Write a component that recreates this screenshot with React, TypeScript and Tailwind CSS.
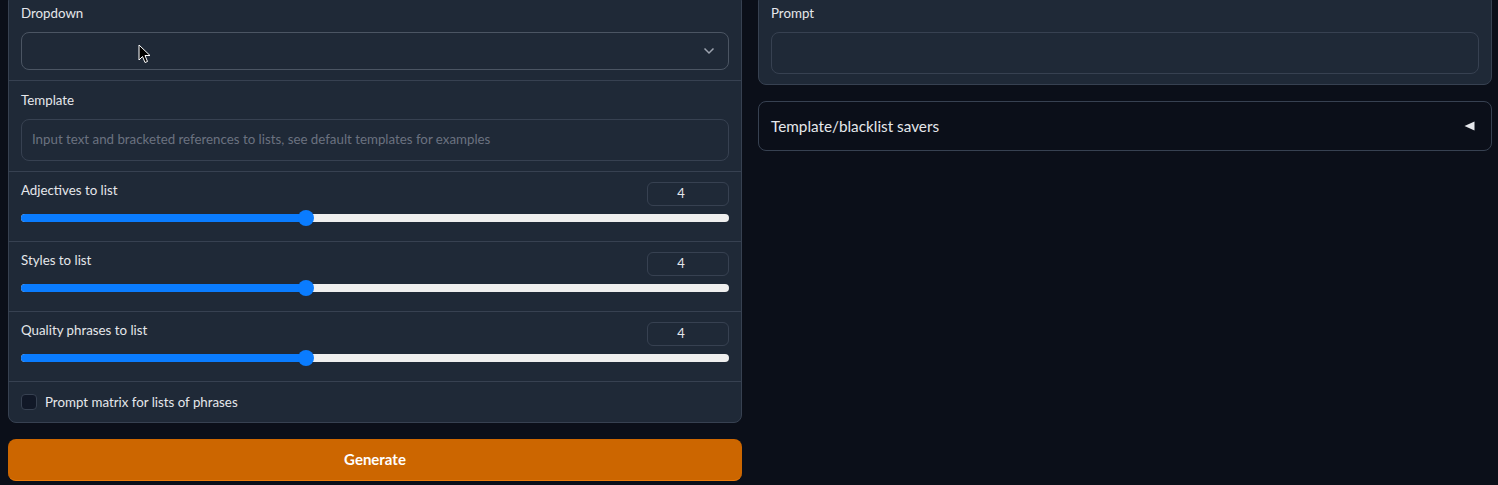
import React from "react";

const font = { fontFamily: "Lato, 'Liberation Sans', sans-serif" };

function Slider({ label, pct }: { label: string; pct: number }) {
  return (
    <div className="border-b border-[#374151] px-3 pt-[10px] pb-[11px]">
      <div className="flex h-6 items-start justify-between">
        <span className="text-[13.3px] leading-4 text-[#e5e7eb]">{label}</span>
        <div className="flex h-6 w-[82px] items-center justify-center rounded-md border border-[#374151] pr-[14px] text-[13px] text-[#e5e7eb]">
          4
        </div>
      </div>
      <div className="relative flex h-6 items-center">
        <div className="flex h-2 w-full overflow-hidden rounded-full bg-[#efefef]">
          <div className="h-full bg-[#0a7cff]" style={{ width: `${pct}%` }} />
        </div>
        <div
          className="absolute top-1/2 h-4 w-4 -translate-x-1/2 -translate-y-1/2 rounded-full bg-[#0a7cff]"
          style={{ left: `${pct}%` }}
        />
      </div>
    </div>
  );
}

export default function App() {
  return (
    <div
      className="relative h-[485px] w-full overflow-hidden bg-[#0b0f19] pl-2 pr-[6px]"
      style={font}
    >
      <div className="-mt-[7px] flex gap-4">
        {/* Left column */}
        <div className="flex flex-1 flex-col gap-4">
          <div className="rounded-lg border border-[#374151] bg-[#1f2937]">
            <div className="border-b border-[#374151] px-3 pt-[9px] pb-[10px]">
              <div className="mb-[9px] text-[13.3px] leading-5 text-[#e5e7eb]">Dropdown</div>
              <div className="relative flex h-[38px] items-center justify-end rounded-lg border border-[#4b5563] px-3">
                <svg width="12" height="8" viewBox="0 0 12 8" className="mr-[1px]">
                  <path d="M1.5 1.5 L6 6 L10.5 1.5" fill="none" stroke="#9ca3af" strokeWidth="1.5" />
                </svg>
                <svg
                  width="14"
                  height="20"
                  viewBox="0 0 14 20"
                  className="absolute left-[116px] top-[11px]"
                >
                  <path
                    d="M1 1 L1 16 L4.5 12.5 L7 18.5 L9.5 17.5 L7 11.5 L12 11.5 Z"
                    fill="#000"
                    stroke="#fff"
                    strokeWidth="1"
                    strokeLinejoin="round"
                  />
                </svg>
              </div>
            </div>
            <div className="border-b border-[#374151] px-3 pt-[9px] pb-[10px]">
              <div className="mb-[9px] text-[13.3px] leading-5 text-[#e5e7eb]">Template</div>
              <div className="flex h-[42px] items-center rounded-lg border border-[#374151] px-[10px] text-[13.3px] text-[#6b7280]">
                Input text and bracketed references to lists, see default templates for examples
              </div>
            </div>
            <Slider label="Adjectives to list" pct={40.3} />
            <Slider label="Styles to list" pct={40.3} />
            <Slider label="Quality phrases to list" pct={40.3} />
            <div className="flex items-center gap-2 px-3 py-[10px]">
              <div className="flex h-5 items-center">
                <div className="h-4 w-4 rounded-[4px] border border-[#374151] bg-[#111827]" />
              </div>
              <span className="text-[13.3px] leading-5 text-[#e5e7eb]">
                Prompt matrix for lists of phrases
              </span>
            </div>
          </div>
          <button className="h-[42px] w-full rounded-lg border-b border-b-[#ed7c0c] bg-[#cc6600] text-[15px] font-bold text-white">
            Generate
          </button>
        </div>

        {/* Right column */}
        <div className="flex flex-1 flex-col gap-4">
          <div className="rounded-lg border border-[#374151] bg-[#1f2937] px-3 pt-[9px] pb-[10px]">
            <div className="mb-[9px] text-[13.3px] leading-5 text-[#e5e7eb]">Prompt</div>
            <div className="h-[42px] rounded-lg border border-[#374151]" />
          </div>
          <div className="flex items-center justify-between rounded-lg border border-[#374151] px-3 py-3">
            <span className="text-[15.3px] leading-6 text-[#e5e7eb]">Template/blacklist savers</span>
            <svg width="11" height="10" viewBox="0 0 11 10" className="mr-[4px]">
              <polygon points="0.5,5 10.5,0.5 10.5,9.5" fill="#e5e7eb" />
            </svg>
          </div>
        </div>
      </div>
    </div>
  );
}
